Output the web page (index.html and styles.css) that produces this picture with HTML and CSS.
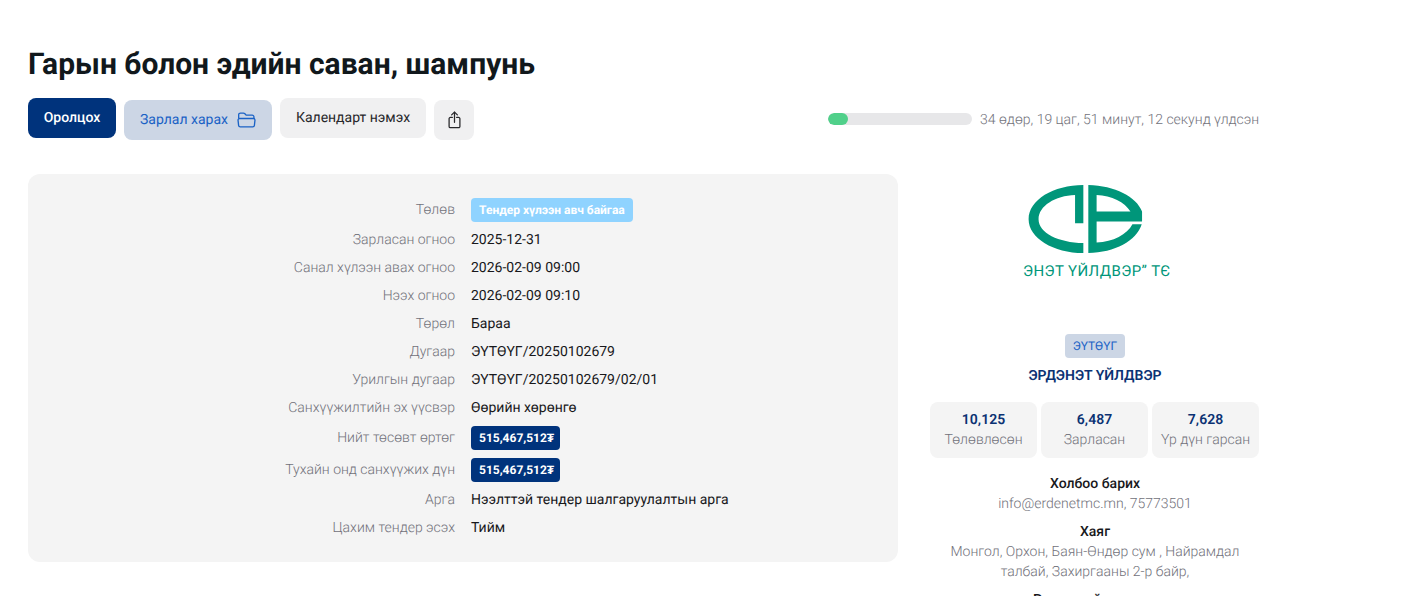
FILE: index.html
```html
<!DOCTYPE html>
<html lang="mn">
<head>
  <meta charset="UTF-8" />
  <meta name="viewport" content="width=device-width, initial-scale=1.0"/>
  <title>Гарын болон эдийн саван, шампунь</title>
  <link rel="stylesheet" href="styles.css">
</head>
<body>
  <div class="page">
    <h1 class="title">Гарын болон эдийн саван, шампунь</h1>

    <div class="toolbar">
      <div class="actions">
        <a class="btn btn-primary" href="#">Оролцох</a>
        <a class="btn btn-soft" href="#">Зарлал харах
          <svg class="icon-folder" viewBox="0 0 20 17" fill="none" stroke="currentColor" stroke-width="1.4" stroke-linejoin="round">
            <path d="M1.7 7V3a1.9 1.9 0 0 1 1.9-1.9h3.2c.6 0 1.1.3 1.5.7l1.3 1.5h6.4a1.9 1.9 0 0 1 1.9 1.9V7"/>
            <path d="M1 8.6A1.7 1.7 0 0 1 2.7 6.9h14.6A1.7 1.7 0 0 1 19 8.6l-.6 5.6a1.8 1.8 0 0 1-1.8 1.6H3.4a1.8 1.8 0 0 1-1.8-1.6z"/>
          </svg>
        </a>
        <a class="btn btn-grey" href="#">Календарт нэмэх</a>
        <a class="btn btn-share" href="#" aria-label="Хуваалцах">
          <svg class="icon-share" viewBox="0 0 14 20" fill="none" stroke="currentColor" stroke-width="1.4" stroke-linecap="round" stroke-linejoin="round">
            <path d="M7 12.5V1.2"/>
            <path d="M3.8 4.3 7 1.2l3.2 3.1"/>
            <path d="M4.6 7.2H2.4a1.4 1.4 0 0 0-1.4 1.4v8.6a1.4 1.4 0 0 0 1.4 1.4h9.2a1.4 1.4 0 0 0 1.4-1.4V8.6a1.4 1.4 0 0 0-1.4-1.4H9.4"/>
          </svg>
        </a>
      </div>
      <div class="countdown">
        <div class="progress"><div class="progress-fill" style="width: 14%"></div></div>
        <span class="countdown-text">34 өдөр, 19 цаг, 51 минут, 12 секунд үлдсэн</span>
      </div>
    </div>

    <div class="content">
      <div class="panel">
        <div class="info-row"><div class="info-label">Төлөв</div><div class="info-value"><span class="badge badge-sky">Тендер хүлээн авч байгаа</span></div></div>
        <div class="info-row"><div class="info-label">Зарласан огноо</div><div class="info-value">2025-12-31</div></div>
        <div class="info-row"><div class="info-label">Санал хүлээн авах огноо</div><div class="info-value">2026-02-09 09:00</div></div>
        <div class="info-row"><div class="info-label">Нээх огноо</div><div class="info-value">2026-02-09 09:10</div></div>
        <div class="info-row"><div class="info-label">Төрөл</div><div class="info-value">Бараа</div></div>
        <div class="info-row"><div class="info-label">Дугаар</div><div class="info-value">ЭҮТӨҮГ/20250102679</div></div>
        <div class="info-row"><div class="info-label">Урилгын дугаар</div><div class="info-value">ЭҮТӨҮГ/20250102679/02/01</div></div>
        <div class="info-row"><div class="info-label">Санхүүжилтийн эх үүсвэр</div><div class="info-value">Өөрийн хөрөнгө</div></div>
        <div class="info-row"><div class="info-label">Нийт төсөвт өртөг</div><div class="info-value"><span class="badge badge-navy">515,467,512₮</span></div></div>
        <div class="info-row"><div class="info-label">Тухайн онд санхүүжих дүн</div><div class="info-value"><span class="badge badge-navy">515,467,512₮</span></div></div>
        <div class="info-row"><div class="info-label">Арга</div><div class="info-value">Нээлттэй тендер шалгаруулалтын арга</div></div>
        <div class="info-row"><div class="info-label">Цахим тендер эсэх</div><div class="info-value">Тийм</div></div>
      </div>

      <div class="org">
        <div class="logo">
          <svg class="logo-mark" viewBox="25 15 343 205" fill="#00967a">
            <path d="M190 15C100 15 25 60 25 118c0 57 75 102 165 102v-30c-75-2-135-30-135-72 0-40 50-71 110-73v85h25z"/>
            <path fill-rule="evenodd" d="M205 15c80 2 145 35 162 80v30H230v63c50-2 92-24 108-55h28c-16 50-81 85-161 87zM230 45v50h102c-17-29-57-48-102-50z"/>
          </svg>
          <div class="logo-text">ЭНЭТ ҮЙЛДВЭР” ТЄ</div>
        </div>

        <span class="org-tag">ЭҮТӨҮГ</span>
        <div class="org-name">ЭРДЭНЭТ ҮЙЛДВЭР</div>

        <div class="stats">
          <div class="stat"><div class="stat-num">10,125</div><div class="stat-label">Төлөвлөсөн</div></div>
          <div class="stat"><div class="stat-num">6,487</div><div class="stat-label">Зарласан</div></div>
          <div class="stat"><div class="stat-num">7,628</div><div class="stat-label">Үр дүн гарсан</div></div>
        </div>

        <div class="contact">
          <div class="contact-title">Холбоо барих</div>
          <div class="contact-text">info@erdenetmc.mn, 75773501</div>
        </div>
        <div class="contact">
          <div class="contact-title">Хаяг</div>
          <div class="contact-text">Монгол, Орхон, Баян-Өндөр сум , Найрамдал талбай, Захиргааны 2-р байр,</div>
        </div>
        <div class="contact">
          <div class="contact-title">Регистрийн дугаар</div>
        </div>
      </div>
    </div>
  </div>
</body>
</html>
```

FILE: styles.css
```css
html, body {
  height: 596px;
  overflow: hidden;
}

body {
  margin: 0;
  background: #fff;
  font-family: Roboto, "Liberation Sans", sans-serif;
  font-size: 14px;
  line-height: 20px;
  color: #18181b;
  text-rendering: geometricPrecision;
}

.page {
  width: 1232px;
  padding: 45px 0 0 28px;
}

.title {
  margin: 0;
  font-size: 30px;
  line-height: 40px;
  font-weight: 700;
  color: #11181c;
}

.toolbar {
  display: flex;
  justify-content: space-between;
  align-items: flex-start;
  margin-top: 13px;
}

.actions {
  display: flex;
  align-items: flex-start;
  gap: 8px;
}

.btn {
  display: flex;
  align-items: center;
  justify-content: center;
  height: 40px;
  border-radius: 8px;
  text-decoration: none;
  box-sizing: border-box;
}

.btn-primary {
  width: 88px;
  background: #00337c;
  color: #fff;
  font-weight: 500;
}

.btn-soft {
  width: 148px;
  margin-top: 2px;
  gap: 9px;
  background: #ccd6e5;
  color: #1a62c5;
}

.btn-grey {
  width: 146px;
  background: #f0f0f1;
  color: #27272a;
}

.btn-share {
  width: 40px;
  margin-top: 2px;
  background: #f0f0f1;
  color: #27272a;
}

.icon-folder {
  width: 19px;
  height: 16px;
}

.icon-share {
  width: 13px;
  height: 18px;
}

.countdown {
  display: flex;
  align-items: flex-start;
  gap: 8px;
  margin-top: 11px;
}

.progress {
  width: 144px;
  height: 12px;
  margin-top: 4px;
  border-radius: 6px;
  background: #e7e7e9;
  overflow: hidden;
}

.progress-fill {
  height: 100%;
  border-radius: 6px;
  background: #50d08a;
}

.countdown-text {
  width: 280px;
  margin-top: 1px;
  white-space: nowrap;
  font-weight: 300;
  color: #71717a;
}

.content {
  display: flex;
  align-items: flex-start;
  margin-top: 34px;
}

.panel {
  width: 870px;
  flex-shrink: 0;
  box-sizing: border-box;
  padding: 20px 0;
  border-radius: 12px;
  background: #f4f4f4;
}

.info-row {
  display: grid;
  grid-template-columns: 427px 1fr;
  column-gap: 16px;
  align-items: center;
  padding: 4px 0;
}

.info-label {
  text-align: right;
  font-weight: 300;
  color: #71717a;
}

.info-value {
  color: #18181b;
}

.badge {
  display: inline-block;
  height: 24px;
  line-height: 24px;
  padding: 0 8px;
  border-radius: 4px;
  font-size: 12px;
  font-weight: 700;
  color: #fff;
  vertical-align: top;
}

.badge-sky {
  background: #8fd3ff;
}

.badge-navy {
  padding-right: 6px;
  background: #00337c;
}

.org {
  flex: 1;
  display: flex;
  flex-direction: column;
  align-items: center;
  padding: 11px 0 0 32px;
}

.logo {
  display: flex;
  flex-direction: column;
  width: 144px;
  height: 149px;
}

.logo-mark {
  width: 115px;
  height: 68px;
  margin-left: 5px;
}

.logo-text {
  margin-top: 8px;
  font-size: 15px;
  line-height: 20px;
  letter-spacing: 0.4px;
  white-space: nowrap;
  color: #00967a;
}

.org-tag {
  width: 60px;
  height: 24px;
  line-height: 24px;
  border-radius: 4px;
  text-align: center;
  font-size: 12px;
  background: #ccd6e5;
  color: #1a62c5;
}

.org-name {
  margin-top: 8px;
  font-weight: 600;
  color: #0b3273;
}

.stats {
  display: grid;
  grid-template-columns: repeat(3, 1fr);
  gap: 4px;
  width: 329px;
  margin: 16px 1px 0 0;
}

.stat {
  height: 56px;
  box-sizing: border-box;
  padding-top: 8px;
  border-radius: 8px;
  background: #f4f4f4;
  text-align: center;
}

.stat-num {
  font-weight: 600;
  color: #0b3273;
}

.stat-label {
  font-weight: 300;
  color: #71717a;
}

.contact {
  width: 300px;
  margin-top: 8px;
  text-align: center;
}

.stats + .contact {
  margin-top: 16px;
}

.contact-title {
  font-weight: 500;
  color: #18181b;
}

.contact-text {
  font-weight: 300;
  color: #71717a;
}
```
